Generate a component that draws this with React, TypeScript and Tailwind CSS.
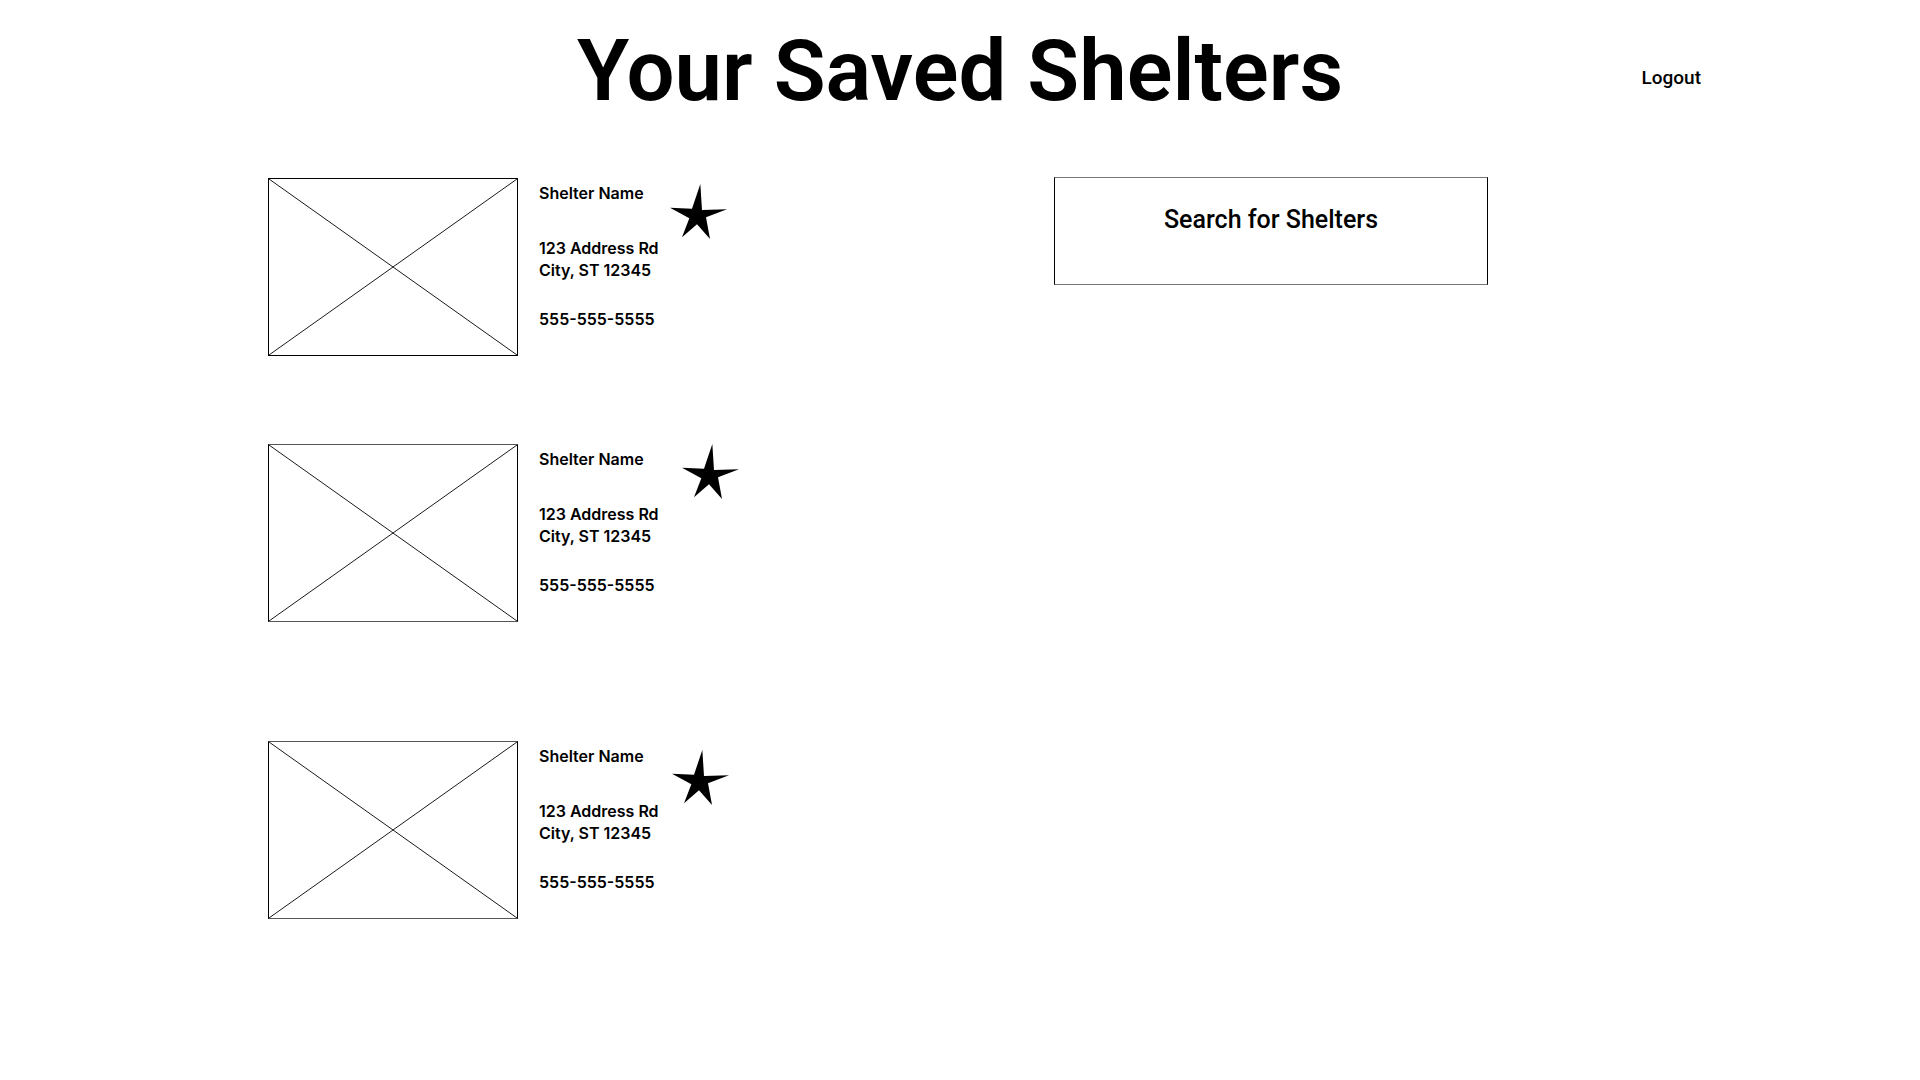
type Shelter = {
  id: number;
  name: string;
  street: string;
  city: string;
  phone: string;
  card: string;
  frame: string;
  star: string;
};

const details = {
  name: "Shelter Name",
  street: "123 Address Rd",
  city: "City, ST 12345",
  phone: "555-555-5555",
};

const shelters: Shelter[] = [
  { id: 1, ...details, card: "", frame: "border-black", star: "ml-[131px] mt-1.5" },
  { id: 2, ...details, card: "mt-[88px]", frame: "border-x-black border-y-[#555]", star: "ml-[143px]" },
  { id: 3, ...details, card: "mt-[119px]", frame: "border-x-black border-y-[#555]", star: "ml-[133px] mt-[9px]" },
];

function PhotoPlaceholder({ frame }: { frame: string }) {
  return (
    <div className={`h-[178px] w-[250px] shrink-0 border ${frame}`}>
      <svg
        viewBox="0 0 248 176"
        preserveAspectRatio="none"
        className="block h-full w-full"
        stroke="black"
        strokeWidth="0.9"
        role="img"
        aria-label="Shelter photo"
      >
        <line x1="0" y1="0" x2="248" y2="176" />
        <line x1="248" y1="0" x2="0" y2="176" />
      </svg>
    </div>
  );
}

function StarIcon() {
  return (
    <svg viewBox="0 0 171 165" className="block h-[55px] w-[57px]" fill="black" aria-hidden="true">
      <polygon points="91,0 96,78 171,76 108,100 120,165 81,121 36,160 58,103 0,71 66,74" />
    </svg>
  );
}

function ShelterCard({ shelter }: { shelter: Shelter }) {
  return (
    <li className={`flex items-start ${shelter.card}`}>
      <PhotoPlaceholder frame={shelter.frame} />
      <div className="ml-[21px] w-0 whitespace-nowrap pt-1 font-['Inter',sans-serif] text-[16px] leading-[22px] font-semibold">
        <h2>{shelter.name}</h2>
        <address className="mt-[33px] not-italic">
          {shelter.street}
          <br />
          {shelter.city}
        </address>
        <p className="mt-[27px]">{shelter.phone}</p>
      </div>
      <button type="button" aria-label="Remove from saved shelters" className={`shrink-0 ${shelter.star}`}>
        <StarIcon />
      </button>
    </li>
  );
}

export default function App() {
  return (
    <div className="min-h-screen bg-white pb-16 font-['Roboto',sans-serif] text-black">
      <header className="grid grid-cols-[1fr_auto_1fr] items-center pt-[21px]">
        <h1 className="col-start-2 text-[85px] leading-[100px] font-semibold">Your Saved Shelters</h1>
        <a href="#logout" className="mr-[219px] mt-3.5 justify-self-end text-[19px] leading-6 font-medium">
          Logout
        </a>
      </header>
      <main className="mt-[57px] flex items-start justify-between pr-[432px] pl-[268px]">
        <ul>
          {shelters.map((s) => (
            <ShelterCard key={s.id} shelter={s} />
          ))}
        </ul>
        <button
          type="button"
          className="-mt-px w-[434px] border border-x-black border-y-[#777] pt-[27px] pb-[49px] text-[25px] leading-[30px] font-medium"
        >
          Search for Shelters
        </button>
      </main>
    </div>
  );
}
